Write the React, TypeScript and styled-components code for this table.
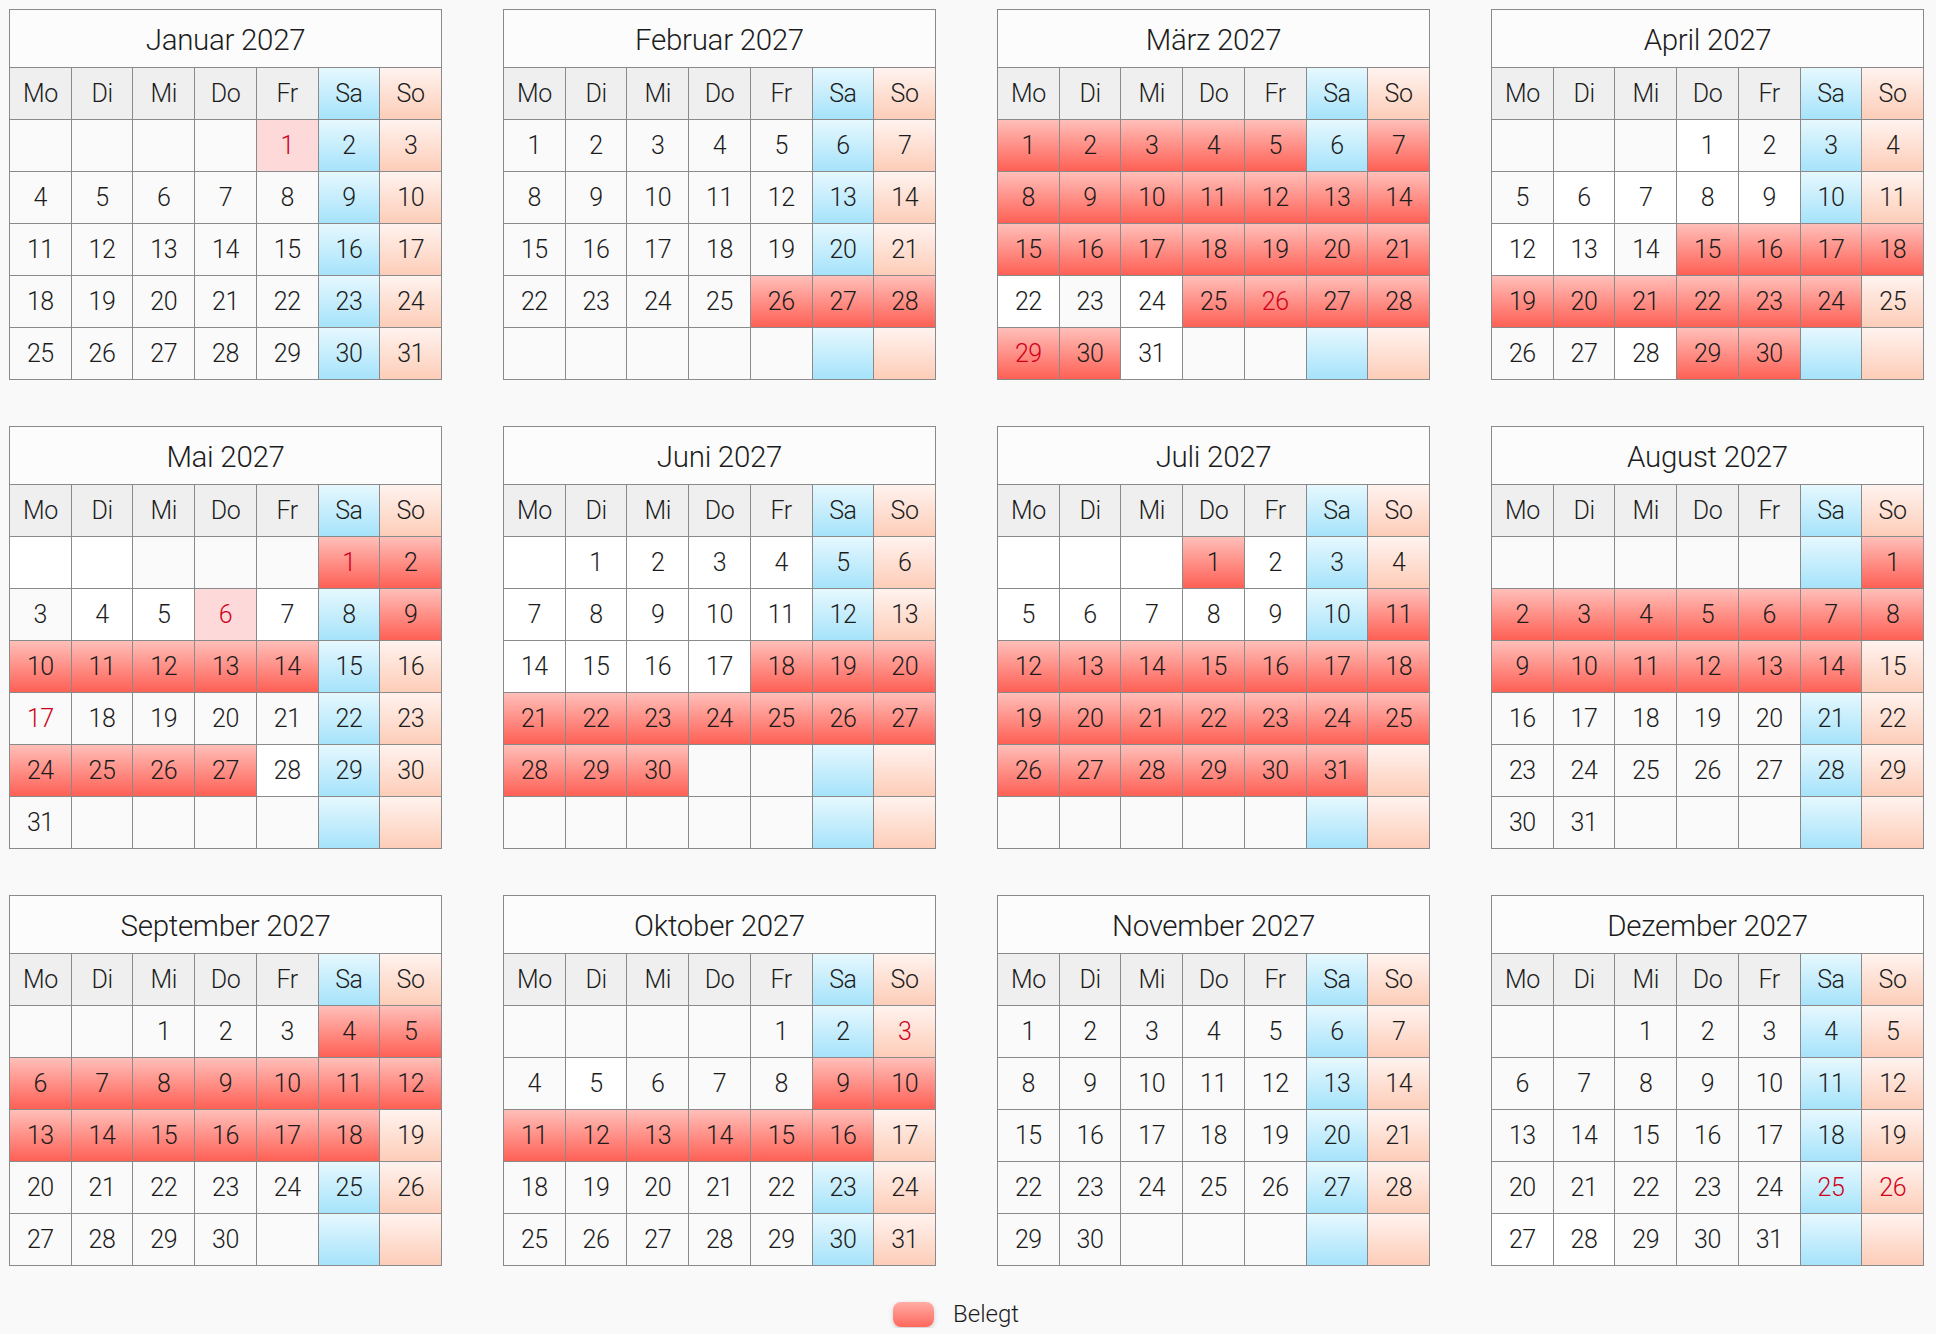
import styled, { createGlobalStyle, css } from 'styled-components';

const GlobalStyle = createGlobalStyle`
  body {
    margin: 0;
    background: #f9f9f9;
    font-family: Roboto, 'Liberation Sans', Arial, sans-serif;
    font-weight: 300;
    color: #1c1c1c;
  }
`;

type Kind = 'plain' | 'white' | 'sat' | 'sun' | 'booked' | 'holiday';

interface MonthData {
  name: string;
  booked: number[];
  red: number[];
  white: number[];
}

const range = (a: number, b: number) =>
  Array.from({ length: b - a + 1 }, (_, i) => a + i);

const YEAR = 2027;
const WEEKDAYS = ['Mo', 'Di', 'Mi', 'Do', 'Fr', 'Sa', 'So'];

// white[] uses negative numbers for leading blank cells (-1 = first blank)
const MONTHS: MonthData[] = [
  { name: 'Januar', booked: [], red: [1], white: [] },
  { name: 'Februar', booked: [26, 27, 28], red: [], white: [] },
  {
    name: 'März',
    booked: [...range(1, 5), 7, ...range(8, 21), ...range(25, 30)],
    red: [26, 29],
    white: [22, 24, 31]
  },
  {
    name: 'April',
    booked: [...range(15, 24), 29, 30],
    red: [],
    white: [1, 6, 7, 8, 9, 12, 13, 28]
  },
  {
    name: 'Mai',
    booked: [1, 2, 9, ...range(10, 14), ...range(24, 27)],
    red: [1, 6, 17],
    white: [-1, -2, 4, 5, 7, 28]
  },
  {
    name: 'Juni',
    booked: range(18, 30),
    red: [],
    white: [-1, ...range(1, 4), ...range(7, 11), ...range(14, 17)]
  },
  {
    name: 'Juli',
    booked: [1, ...range(11, 31)],
    red: [],
    white: [-1, -2, -3, 2, ...range(5, 9)]
  },
  { name: 'August', booked: range(1, 14), red: [], white: [] },
  { name: 'September', booked: range(4, 18), red: [], white: [] },
  { name: 'Oktober', booked: range(9, 16), red: [3], white: [5] },
  { name: 'November', booked: [], red: [], white: [] },
  { name: 'Dezember', booked: [], red: [25, 26], white: [27, 28] }
];

const monthInfo = (m: number) => {
  const offset = (new Date(YEAR, m, 1).getDay() + 6) % 7;
  const days = new Date(YEAR, m + 1, 0).getDate();
  return { offset, days, weeks: Math.ceil((offset + days) / 7) };
};

const Page = styled.div`
  padding: 9px 0 0 9px;
  width: 1924px;
  box-sizing: border-box;
`;

const MonthsGrid = styled.div`
  display: grid;
  grid-template-columns: repeat(4, 433px);
  column-gap: 61px;
  row-gap: 46px;
  align-items: start;
`;

const Calendar = styled.div`
  width: 433px;
  box-sizing: border-box;
  border-top: 1px solid #8a8a8a;
  border-left: 1px solid #8a8a8a;
`;

const Title = styled.div`
  height: 58px;
  box-sizing: border-box;
  padding-top: 3px;
  display: flex;
  align-items: center;
  justify-content: center;
  background: #fcfcfc;
  border-right: 1px solid #8a8a8a;
  border-bottom: 1px solid #8a8a8a;
  font-size: 29.5px;
  letter-spacing: -0.3px;
`;

const Days = styled.div`
  display: grid;
  grid-template-columns: repeat(7, 1fr);
  grid-auto-rows: 52px;
`;

const sat = css`
  background: linear-gradient(to bottom, #e6f8fe, #a6e3fb);
`;
const sun = css`
  background: linear-gradient(to bottom, #fff3ef, #fdcdb8);
`;

const backgrounds: Record<Kind, ReturnType<typeof css> | string> = {
  plain: 'background: #fafafa;',
  white: 'background: #ffffff;',
  sat,
  sun,
  booked: css`
    background: linear-gradient(to bottom, #ffbfb9, #fe6055);
  `,
  holiday: 'background: #fdd9da;'
};

const Cell = styled.div<{ $kind: Kind; $red?: boolean }>`
  display: flex;
  align-items: center;
  justify-content: center;
  border-right: 1px solid #8a8a8a;
  border-bottom: 1px solid #8a8a8a;
  font-size: 25px;
  letter-spacing: -0.4px;
  color: ${({ $red }) => ($red ? '#d0021b' : '#1c1c1c')};
  ${({ $kind }) => backgrounds[$kind]}
`;

const HeadCell = styled(Cell)<{ $kind: Kind }>`
  ${({ $kind }) => ($kind === 'plain' ? 'background: #efefef;' : '')}
`;

const Legend = styled.div`
  display: flex;
  align-items: center;
  justify-content: center;
  gap: 19px;
  margin-top: 34px;
  padding-right: 21px;
`;

const Swatch = styled.div`
  width: 41px;
  height: 25px;
  border-radius: 8px;
  background: linear-gradient(to bottom, #ffada5, #ff675c);
  box-shadow: 0 2px 5px rgba(0, 0, 0, 0.18);
`;

const LegendLabel = styled.span`
  font-size: 24px;
`;

function Month({ index, weeks }: { index: number; weeks: number }) {
  const data = MONTHS[index];
  const { offset, days } = monthInfo(index);
  const cells = [];

  for (let i = 0; i < weeks * 7; i++) {
    const col = i % 7;
    const day = i - offset + 1;
    const inMonth = day >= 1 && day <= days;
    const blankId = i < offset ? -(i + 1) : 0;
    let kind: Kind = 'plain';
    if (col === 5) kind = 'sat';
    if (col === 6) kind = 'sun';
    if (inMonth) {
      if (data.booked.includes(day)) kind = 'booked';
      else if (col < 5 && data.white.includes(day)) kind = 'white';
      else if (col < 5 && data.red.includes(day) && day !== 17) kind = 'holiday';
    } else if (blankId && col < 5 && data.white.includes(blankId)) {
      kind = 'white';
    }
    cells.push(
      <Cell key={i} $kind={kind} $red={inMonth && data.red.includes(day)}>
        {inMonth ? day : ''}
      </Cell>
    );
  }

  return (
    <Calendar>
      <Title>
        {data.name} {YEAR}
      </Title>
      <Days>
        {WEEKDAYS.map((d, i) => (
          <HeadCell key={d} $kind={i === 5 ? 'sat' : i === 6 ? 'sun' : 'plain'}>
            {d}
          </HeadCell>
        ))}
        {cells}
      </Days>
    </Calendar>
  );
}

export default function App() {
  const rowWeeks = [0, 1, 2].map((r) =>
    Math.max(...[0, 1, 2, 3].map((c) => monthInfo(r * 4 + c).weeks))
  );

  return (
    <>
      <GlobalStyle />
      <Page>
        <MonthsGrid>
          {MONTHS.map((_, i) => (
            <Month key={i} index={i} weeks={rowWeeks[Math.floor(i / 4)]} />
          ))}
        </MonthsGrid>
        <Legend>
          <Swatch />
          <LegendLabel>Belegt</LegendLabel>
        </Legend>
      </Page>
    </>
  );
}
